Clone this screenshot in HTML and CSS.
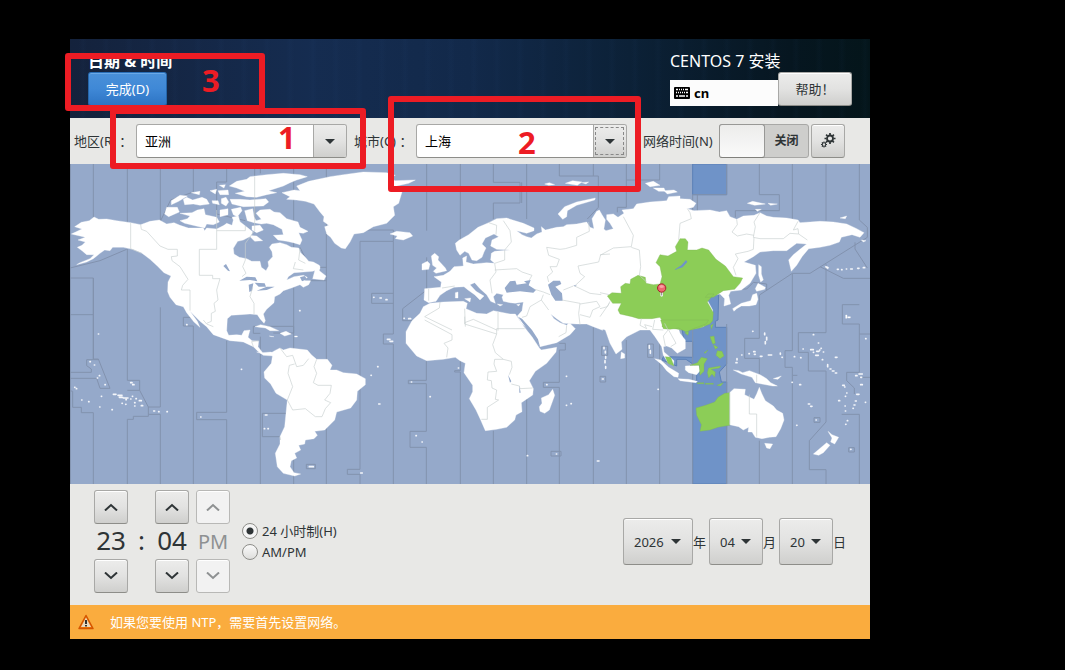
FILE: index.html
```html
<!DOCTYPE html>
<html lang="zh-CN">
<head>
<meta charset="utf-8">
<title>日期 &amp; 时间</title>
<link rel="stylesheet" href="styles.css">
</head>
<body>
<main class="installer">
  <header class="header">
    <div class="header-left">
      <h1 class="title">日期 &amp; 时间</h1>
      <button class="btn btn-primary" type="button">完成(D)</button>
    </div>
    <div class="header-right">
      <p class="product">CENTOS 7 安装</p>
      <div class="header-tools">
        <button class="keyboard" type="button">
          <svg width="16" height="12" viewBox="0 0 16 12" aria-hidden="true"><rect width="16" height="12" rx="1" fill="#000"/><path d="M2 2.500h2M5 2.500h1M7 2.500h1M9 2.500h1M11 2.500h3M2 5.500h1M4 5.500h1M6 5.500h1M8 5.500h1M10 5.500h1M12 5.500h2M2 9h2M5 9h6M12 9h2" stroke="#fff" stroke-width="1.600"/></svg>
          <span>cn</span>
        </button>
        <button class="btn btn-help" type="button">帮助！</button>
      </div>
    </div>
  </header>

  <section class="toolbar">
    <label class="region-label" for="region">地区(R) ：</label>
    <div class="combo">
      <input class="combo-input" id="region" type="text" size="1" value="亚洲">
      <button class="combo-button" type="button" aria-label="选择地区"><svg width="10" height="5" viewBox="0 0 10 5"><path d="M0 0h10L5 5z" fill="#2e3436"/></svg></button>
    </div>
    <label class="city-label" for="city">城市(C) ：</label>
    <div class="combo">
      <input class="combo-input" id="city" type="text" size="1" value="上海">
      <button class="combo-button combo-button-focus" type="button" aria-label="选择城市"><svg width="10" height="5" viewBox="0 0 10 5"><path d="M0 0h10L5 5z" fill="#2e3436"/></svg></button>
    </div>
    <label class="ntp-label" for="ntp">网络时间(N)</label>
    <div class="switch"><input class="switch-knob" id="ntp" type="checkbox"><span class="switch-text">关闭</span></div>
    <button class="btn btn-gear" type="button" aria-label="配置 NTP">
      <svg width="16" height="16" viewBox="0 0 16 16" fill="none" stroke="#2e3436"><circle cx="10" cy="5.500" r="3" stroke-width="1.800"/><path d="M10 0v2M10 9v2M4.500 5.500h2M13.500 5.500h2M6.100 1.600l1.400 1.400M12.500 8l1.400 1.400M13.900 1.600L12.500 3M7.500 8L6.100 9.400" stroke-width="1.700"/><circle cx="4" cy="11.500" r="1.800" stroke-width="1.100"/><path d="M4 8.500v1.200M4 13.300v1.200M1 11.500h1.200M5.800 11.500H7M1.900 9.400l.8.800M5.300 12.800l.8.800M6.100 9.400l-.8.800M2.700 12.800l-.8.800" stroke-width="1.100"/></svg>
    </button>
  </section>

  <svg class="map" viewBox="0 0 2400 960" role="img" aria-label="时区地图">
    <rect width="2400" height="960" fill="#95a9ca"/>
    <!-- selected time zone -->
    <g class="zone">
      <path d="M1868 0h102v92h-102z"/>
      <path transform="translate(1590 468)" d="M320 -80L356 -80 354 0 346 4 346 22 380 22 380 132 358 156 364 186 380 186 380 492 278 492 278 184 290 182 290 140 258 118 230 118 230 138 186 120 190 110 278 112 278 64 252 64 246 26 270 26 270 10 330 -8z"/>
    </g>
    <!-- time zone limits -->
    <g class="limits">
      <path d="M1 0V960M70 0V170M70 342V585L85 585 120 673 90 673 80 643 0 643M0 342H70V452H1M70 452V585M50 587H84M50 587V605L64 615V625H0M0 680L8 682V730H34V746H70V960M172 0V175M172 255V649H209V679L235 729V757H190V766H172V960M235 729H271M235 751H271M172 679H209M271 0V172L302 108 370 84M271 430V729M271 751V960M370 0V84M370 486V960M340 460H370M340 460V486H370M470 0V54H440V150L526 170M470 530V745H380V767H470V960M554 0V170M571 0V28M571 518V960M550 487H671V507H610M550 487V508H571M577 748H650M577 748V818H630M671 0V250M671 370V960M769 0V960M690 250L720 310H770M720 350H770M870 80V198H970V232H870V916H832V931H870V960M970 0V60M970 232V510H940V540H970V960M970 388H905V418H970"/>
      <path d="M0 312L90 290 170 256M1070 0V200M1070 280V378L998 434V470H1035M1069 590V649H1015V659H1069V802H1020V850H1069V960M1171 0V240M1171 588V620H1154V624H1171V960M1270 0V55H1350V117H1270V165M1270 800V960M1355 55V117M1370 0V165M1370 700V960M1468 0V36H1585M1468 538H1486V558H1468V655H1420V670H1468V960M1570 0V36M1585 36V130L1552 165M1570 490V960M1669 0V130H1642V145M1669 528V960M1769 0V48H1669M1769 528V960M1882 92V142M1868 92V960M1970 0V92H1868M1970 480V960M2068 0V92H2128V140H1996V160M2068 392V523H2024V583H2068V630M2068 830V960M2167 0V165M2167 329V560H2145V610H2167V634H2182M2167 634V960M2268 0V170M2268 300V506H2185V565H2215V621H2268V774L2218 830V917H2268V960M2368 0V168L2392 190V220L2220 328H2167L2070 392M2250 308L2320 343H2400M2355 235V255L2392 312M2368 422H2317V480H2368V510H2400M2368 510V625H2330V650L2353 672V690M2368 640H2400M2315 751H2368V960M1970 375H2030L2050 355 2090 360V380"/>
      <path d="M709 901h27v13h-27zM2232 761h18v14h-18zM2336 851h17v13h-17zM1443 862h30v14h-30zM1590 637h17v17h-17zM1595 547h18v27h-18zM1733 540h17v40h-17z"/>
    </g>
    <g class="land">
      <!-- North America -->
      <g transform="translate(0 -12)">
        <path d="M4 222L36 207 14 200 34 187 58 182 72 171 86 178 110 177 140 182 182 188 212 194 240 184 268 180 290 192 312 188 330 196 355 204 400 204 404 212 410 204 440 207 462 196 470 190 486 196 490 180 486 172 505 168 510 185 535 205 548 215 543 228 520 240 503 244 490 265 492 282 508 292 530 296 545 304 570 304 574 322 588 332 596 318 594 305 608 290 606 275 598 262 606 252 630 248 650 254 664 262 686 264 692 278 706 292 716 304 730 306 748 316 750 326 728 334 700 336 672 338 655 350 650 360 672 350 700 346 712 352 704 362 722 362 716 374 700 382 690 374 664 384 640 392 630 402 614 410 612 428 590 448 580 462 586 482 582 490 570 476 562 464 540 462 510 464 484 466 472 476 470 512 476 526 500 524 515 526 522 512 540 510 534 532 546 542 566 544 564 560 578 578 604 576 612 588 580 586 562 572 550 560 520 546 500 544 480 542 430 524 410 500 390 484 360 454 382 484 390 502 372 486 350 458 340 440 318 434 300 412 293 395 294 366 303 348 282 338 262 318 240 298 214 278 188 268 160 262 128 262 120 272 104 270 90 280 70 296 50 306 20 314 30 308 60 296 72 284 50 284 36 272 22 262 36 256 46 246 24 240 46 232 30 228z"/>
        <path d="M736 326L750 318 748 332 768 348 762 360 742 358 728 356zM290 142L322 142 328 156 296 170 284 162zM330 160L366 158 382 150 402 146 406 164 440 172 448 186 430 194 410 192 404 204 378 198 344 190 330 182 352 176 360 168zM340 118L350 112 368 120 396 112 410 118 418 132 390 136 370 132 344 134zM304 122L330 106 352 108 326 124 304 134zM364 98L390 94 388 104zM420 92L440 88 436 102zM444 92L474 90 476 104 450 104zM426 122h18l4 12-20-4zM454 116l14-4 8 14-8 12-14-8zM480 118L510 118 540 120 588 116 596 126 580 138 520 140 486 132zM484 148L512 142 516 152 502 170 490 164zM450 150l24-4v18l-24 6zM448 76l18-2-4 10z"/>
        <path d="M478 78L500 64 530 58 540 50 590 44 640 40 690 44 712 50 680 60 660 68 640 78 596 92 620 98 590 104 560 112 530 110 496 100 524 94 500 84z"/>
        <path d="M524 152L548 146 552 170 558 182 574 178 558 160 570 150 600 148 612 156 630 158 650 176 684 186 690 202 714 214 700 220 686 218 696 240 690 254 670 248 650 244 624 240 610 226 640 224 636 208 610 194 590 190 574 192 552 188 532 182zM546 198L570 196 580 210 560 218 546 210zM536 226l24 2 18 14-24 2z"/>
        <path d="M636 98L672 90 690 92 680 78 716 64 780 50 820 44 880 36 950 38 976 46 954 54 976 62 1036 60 1016 70 980 78 996 96 986 130 970 140 974 166 950 190 910 200 880 218 852 222 840 246 826 266 814 264 794 250 782 232 770 222 764 200 776 196 760 184 762 170 750 156 732 132 706 124 680 120 650 118 660 110z"/>
        <path d="M555 500L572 494 600 500 626 512 600 512 586 504zM630 520l18-6 16 8-20 6zM604 530l-6-2 14 2zM674 528l8 0 0 3-8 0z"/>
      </g>
      <!-- South America -->
      <path transform="translate(0 468)" d="M560 96L578 102 604 98 614 92 630 84 640 90 660 84 712 90 724 104 740 118 772 118 786 136 780 150 800 150 820 158 860 162 886 176 886 194 862 214 860 240 842 264 800 276 794 300 764 330 734 334 742 346 732 356 706 360 704 372 686 376 692 390 674 400 680 414 664 422 660 440 672 458 692 462 674 468 640 460 622 440 616 400 630 372 630 350 644 320 648 280 652 240 618 220 602 192 584 174 582 156 604 130 608 104z"/>
      <!-- Africa and Madagascar -->
      <g transform="translate(930 468)">
        <path d="M78 35L96 2 120 -20 130 -40 150 -50 190 -54 250 -56 262 -50 258 -34 290 -20 320 -18 340 -28 390 -18 406 -18 418 0 432 20 456 50 478 84 484 90 530 82 528 96 500 130 466 154 448 182 460 206 458 225 424 248 426 275 408 285 404 300 380 322 350 328 316 332 302 300 288 270 268 236 278 215 278 196 252 158 256 130 240 122 226 112 190 118 140 122 110 108 78 70zM518 208L524 226 508 270 494 280 480 274 478 260 486 250 484 234 506 224z"/>
      </g>
      <!-- Europe, Arabia and western Asia -->
      <g transform="translate(780 -12)">
        <path d="M376 250L388 240 416 224 444 202 476 188 500 176 530 174 548 180 580 190 612 204 612 212 590 220 560 212 576 224 590 230 604 234 620 222 636 216 634 200 646 210 680 202 700 200 710 194 740 192 770 186 780 202 792 206 786 176 800 154 808 150 816 164 826 180 822 205 818 215 818 511 790 500 770 492 740 492 700 490 680 476 662 462 672 476 690 488 710 496 718 488 736 506 720 524 680 548 630 560 616 530 590 504 574 490 562 468 576 452 580 426 556 430 540 428 520 424 516 412 520 404 500 400 490 410 496 430 482 424 470 404 450 386 434 368 420 374 438 394 462 408 450 420 434 404 414 390 402 380 372 382 350 392 330 406 318 424 296 428 282 420 284 386 332 382 334 366 312 350 340 346 360 334 372 320 400 318 398 294 410 288 408 306 430 312 470 308 494 310 482 300 484 280 494 274 540 270 500 268 482 258 486 240 506 230 492 222 466 234 456 252 468 264 462 276 456 292 440 302 426 300 416 280 404 274 390 286 380 270z"/>
        <path d="M180 222L200 214 240 218 248 228 220 240 196 236 202 228zM304 288L314 280 326 290 324 300 346 324 350 332 318 340 310 334 320 324 308 316zM276 312L292 304 300 312 296 328 276 330zM684 162L704 140 740 126 796 114 794 120 740 136 712 152 710 170 698 178zM404 416l18-2-2 12zM376 398l8-2 0 18-8 0zM502 432l16 2-8 4zM560 434l10-2-4 6zM644 72l14-4 16 6-18 2zM706 70l22-8 28 4-14 10zM756 68l20-2-8 6z"/>
      </g>
      <!-- Eastern Asia -->
      <g transform="translate(1590 -12)">
        <path d="M2 200L18 212 40 206 30 190 20 178 20 164 40 162 54 172 72 160 66 150 100 146 110 132 150 126 200 122 206 110 240 108 240 116 270 118 288 130 280 142 262 146 282 152 330 150 358 156 380 152 390 170 410 178 430 168 462 166 480 158 500 168 520 172 560 174 594 180 600 188 660 184 700 186 740 192 770 206 792 218 780 232 756 224 724 232 718 246 690 256 660 262 626 266 606 290 590 316 574 334 566 300 580 284 600 268 620 252 590 250 560 272 520 272 480 276 460 290 432 306 466 316 468 340 450 370 424 390 392 394 386 406 392 432 372 438 374 416 360 402 340 406 316 412 324 424 338 450 335 480 310 500 270 508 236 508 240 520 256 540 256 566 232 580 215 564 200 558 190 560 192 576 206 588 222 602 220 616 204 608 190 586 185 560 165 530 150 510 120 510 80 530 64 546 66 568 48 582 30 550 16 510 4 506 0 498z"/>
        <path d="M136 70L160 64 180 76 150 80zM160 84l32 0 4 10-20 0zM192 92l30-2 10 6-30 6zM442 130l16-6 38 8-32 4zM504 130l28 2-20 4zM466 148l18 0-12 6zM720 174l20-6-4 8zM784 240l14 2-8 4zM476 314L484 320 484 342 490 360 482 366 476 346zM474 370L496 382 494 388 470 394 466 386zM470 400L474 418 468 434 448 438 424 438 410 446 402 454 398 446 424 430 452 422 458 404zM676 318l10 4 -2 5-8-5zM737 465h4v10h-4zM743 470h8v4h-8zM64 576l10 6 0 12-12 2z"/>
      </g>
      <!-- Oceania -->
      <g transform="translate(1590 468)">
        <path d="M164 116L182 120 206 142 236 160 234 172 222 170 200 152 186 134zM234 176L266 178 292 184 288 188 240 182zM256 138L296 136 300 152 290 164 266 158 256 150zM400 150L416 152 428 158 448 152 480 164 500 176 512 188 532 198 518 198 486 192 466 188 456 172 424 162zM520 176l24-8-10 10zM389 218L402 206 436 208 434 224 462 238 470 222 478 202 486 222 496 242 520 258 530 270 548 280 552 300 542 326 528 350 508 352 486 356 466 352 456 336 444 336 446 322 430 330 416 320 389 314zM494 370L518 372 510 386 500 384zM684 334L696 344 716 352 704 372 692 366 696 354zM680 368L690 376 670 398 656 406 640 402z"/>
      </g>
    </g>
    <!-- land of the selected zone -->
    <g class="green">
      <path transform="translate(1590 -12)" d="M22 408L36 398 64 400 62 380 76 370 90 372 92 358 114 346 136 352 138 370 160 374 180 372 186 350 180 320 168 308 180 284 204 288 230 274 226 260 240 236 256 236 264 246 262 270 290 270 306 264 326 270 348 298 376 318 400 350 428 354 420 370 404 388 370 392 340 412 316 412 324 402 342 402 322 426 340 458 338 482 330 492 300 504 270 510 246 510 200 502 186 500 190 488 180 472 156 476 116 476 96 470 60 462 54 450 64 430 38 430z"/>
      <path transform="translate(1590 468)" d="M182 0L326 0 318 12 280 26 258 36 236 24 210 28 190 26zM254 38l12-4-2 12zM332 16l8-4-6 16zM330 50L342 48 346 70 338 72zM340 74l14 8-8 6zM352 92l14 2 6 14-12 8-12-10zM312 98l12-8-8 10zM196 110L212 112 222 138 204 130zM270 136L292 128 304 112 322 116 312 132 312 154 300 166 298 136zM326 144L362 138 358 144 334 148 346 156 344 172 336 162 326 174 322 158zM292 188h20v3h-20zM316 190h24v3h-24zM350 196l20-8-8 10zM389 218L389 316 354 322 330 330 300 334 304 314 290 286 288 264 316 256 344 246 354 232 374 220z"/>
    </g>
    <!-- inland waters -->
    <g class="water">
      <path transform="translate(0 -12)" d="M508 362L530 350 556 352 562 364 540 360zM536 374L550 370 546 392 538 396zM554 368L584 370 588 380 566 380zM560 392L590 380 614 380 590 390zM460 318L468 312 480 334 474 332zM690 352l14-4 8 10-16 6z"/>
      <path transform="translate(780 -12)" d="M524 384L540 364 556 362 560 374 590 370 582 364 602 360 596 376 618 390 610 398 570 394 530 398zM654 374L670 362 690 362 694 372 676 380 696 400 698 422 676 422 664 404zM564 470L576 476 606 510 624 538 630 560 618 544zM730 376l10 0-4 4z"/>
      <path transform="translate(930 468)" d="M384 164L394 184 390 188zM418 196l4 22-4 0z"/>
    </g>
    <path transform="translate(1590 -12)" d="M222 330L244 316 258 300 262 306 248 322z" fill="#6f93c8"/>
    <!-- country and zone borders on land -->
    <g class="borders">
      <path transform="translate(0 -12)" d="M182 188V266L215 280M212 194L214 208 230 214 270 258 294 268 322 268V288L304 290 306 302 330 320 354 358 338 376 334 390 360 390 360 452M440 150V212H526V198M554 50V212L526 250V300L518 320 528 340 516 350M440 212V268H388V346H428V356H450L440 390 444 420 432 430 436 454 424 460V484L410 490M548 382L540 410 552 430V462M676 306L670 326 700 330M690 266L686 300 706 310"/>
      <path transform="translate(0 468)" d="M400 0L410 12 430 20M550 80L545 65 566 62M630 84L650 110 668 106 680 140 700 136 716 116M740 118L732 140 740 160 730 188 744 196 784 196 780 220 764 240 782 248 766 266 756 290 736 290 706 266 668 270 652 240 668 200 654 160 658 136 674 132M630 350L632 360"/>
      <path transform="translate(780 -12)" d="M476 188L500 196 498 224M520 182L540 212 544 246 524 270 524 300 494 310 498 336 480 360 486 400M494 330L560 326 576 336 606 346 598 360M776 186L778 214 740 232V256L706 266 690 268 650 262 656 286 688 298 680 320 660 320 668 336 652 350 656 366M840 282L812 284 806 306 744 318 750 340 764 350 734 378 780 400 814 404M614 388L640 396 660 404M696 420L750 430 746 460 750 494M750 432L800 424 810 440 788 450 780 472 750 464M640 404L634 420 600 440 590 468 576 472M634 420L656 450M330 426L328 444 284 470 366 510M404 446L406 500M504 456V512M404 488L430 478 500 510M336 384L374 378M296 386L296 422M700 390L730 378"/>
      <path transform="translate(930 468)" d="M134 0L216 44V60L192 70 204 84 200 112M254 -10V12L350 42V26H434M350 42L338 74 346 98 370 118H344L342 132 350 154 324 156 322 180 334 182 336 204 350 210 346 238 356 240 322 262V298H304M370 118L394 124 396 142 388 164M394 192L418 198 420 206 458 204M536 50L558 38 560 16"/>
      <path transform="translate(1590 -12)" d="M70 170L100 226 94 260 40 264 0 286M94 262L118 270 122 320 118 346 140 366M262 146L270 158 274 176 240 190 236 240M480 158L462 186 466 200 460 232 480 236 550 236 570 220 596 222 594 206 580 210 594 184M410 178L412 194 396 216 412 228 440 222 462 226M462 232L460 268 444 274 406 282 414 296 400 322 408 346M596 222L622 240M0 446L22 440 30 424M28 430L0 470M124 476L120 496 140 506 134 494 156 500M164 480L158 508 190 510M194 490L204 510 190 528 196 558M206 510L228 550 212 560M0 398L28 404"/>
      <path transform="translate(1590 468)" d="M448 224V282H470V350M470 164V188M389 218V314"/>
    </g>
    <!-- small islands -->
    <g class="islets">
      <path d="M60 593h1M73 603h1M88 635h1M82 642h1M105 662h1M14 670h1M19 674h1M35 708h1M56 713h1M94 697h1M89 729h1M126 737h1M130 691h8M144 694h12M148 700h10M160 702h14M168 707h1M156 718h1M167 721h1M182 705h1M187 697h1M198 704h1M208 710h6M194 716h1M194 726h1M214 725h4M182 656h4M188 662h4M251 741h3M266 743h1M291 743h1M392 759h1M514 616h1M586 753h5M583 794h1M594 794h1M689 440h1M718 908h12M872 927h5M903 634h1M923 608h1M926 720h4M952 526h8M960 532h8M85 510h1M350 482h1"/>
      <path d="M911 400h1M930 402h4M948 407h3M1002 463h1M1016 464h6M1024 654h1M1080 698h1M1038 815h1M1056 834h1M1165 612h1M1372 875h1M1459 870h1M1430 662h1M1489 637h1M1489 724h1M1503 719h1M1602 550v4M1606 562v5M1607 578v5M1605 590v6M1607 608v5M1597 645h3M1582 891h5M1738 545v8M1741 560v8M1764 676h1"/>
      <path d="M2048 502h1M2084 507v5M2090 520v8M2086 533v6M2015 573h1M2001 584v4M1998 596h3M2037 569h1M2051 563h4M2053 571h3M2071 577h5M2095 573h10M2131 567v4M2136 580h1M2173 578h1M2192 581h1M2199 555h1M2230 512h1M2245 537h1M2222 557h8M2230 565h1M2240 562h7M2237 574h8M2249 558h1M2253 553h1M2260 564h1M2257 587h1M2296 580h5M2273 602v6M2280 615h3M2287 621h5M2296 627h4M2357 635h4M2367 630h10M2372 640h3M2387 524h1M2318 664h5M2324 669h1M2372 662h5M2330 687h1M2306 710h3M2326 697h1M2356 711h3M2352 723h3M2349 733h1M2325 726h1M2326 741h1M2360 691h7M2386 715h1M2332 770h1M2327 781h1M2180 784h1M2238 768h1M2342 856h1M2215 720h4M2222 727h4M2189 662h3M2166 655h1M2270 310h1M2302 316h3M2315 317h1M2329 315h1M2342 315h5M2363 313h4M2380 311h4"/>
    </g>
    <!-- location pin -->
    <g transform="translate(1775 372)"><path d="M0 10V22" stroke="#eee" stroke-width="8" stroke-linecap="round"/><path d="M0 12V22" stroke="#888" stroke-width="3"/><circle r="12.500" fill="#ed6870" stroke="#a5242c" stroke-width="3"/><path d="M-7-2a7 7 0 0 1 14 0q-7 4-14 0z" fill="#f8a2a4"/></g>
  </svg>

  <section class="controls">
    <div class="clock">
      <button class="btn step" type="button" aria-label="增加小时"><svg viewBox="0 0 14 8"><path d="M1 7.500l6-5.500 6 5.500"/></svg></button>
      <span></span>
      <button class="btn step" type="button" aria-label="增加分钟"><svg viewBox="0 0 14 8"><path d="M1 7.500l6-5.500 6 5.500"/></svg></button>
      <button class="btn step" type="button" aria-label="切换到 AM" disabled><svg viewBox="0 0 14 8"><path d="M1 7.500l6-5.500 6 5.500"/></svg></button>
      <span class="digits">23</span><span class="digits">:</span><span class="digits">04</span><span class="meridiem">PM</span>
      <button class="btn step" type="button" aria-label="减少小时"><svg viewBox="0 0 14 8"><path d="M1 .5l6 5.500 6-5.500"/></svg></button>
      <span></span>
      <button class="btn step" type="button" aria-label="减少分钟"><svg viewBox="0 0 14 8"><path d="M1 .5l6 5.500 6-5.500"/></svg></button>
      <button class="btn step" type="button" aria-label="切换到 PM" disabled><svg viewBox="0 0 14 8"><path d="M1 .5l6 5.500 6-5.500"/></svg></button>
    </div>
    <div class="formats">
      <label class="format"><input class="radio" type="radio" name="format" checked>24 小时制(H)</label>
      <label class="format"><input class="radio" type="radio" name="format">AM/PM</label>
    </div>
    <div class="date">
      <div class="date-field"><select class="btn date-select year" id="year"><option>2026</option></select><svg class="date-arrow" viewBox="0 0 10 5"><path d="M0 0h10L5 5z"/></svg></div>
      <label class="date-unit" for="year">年</label>
      <div class="date-field"><select class="btn date-select" id="month"><option>04</option></select><svg class="date-arrow" viewBox="0 0 10 5"><path d="M0 0h10L5 5z"/></svg></div>
      <label class="date-unit" for="month">月</label>
      <div class="date-field"><select class="btn date-select" id="day"><option>20</option></select><svg class="date-arrow" viewBox="0 0 10 5"><path d="M0 0h10L5 5z"/></svg></div>
      <label class="date-unit" for="day">日</label>
    </div>
  </section>

  <footer class="notice">
    <svg width="16" height="16" viewBox="0 0 16 16" aria-hidden="true"><path d="M8 1.500L15 14.500H1z" fill="#f57900" stroke="#d45500" stroke-width="1.500" stroke-linejoin="round"/><path d="M8 3.500L13 13H3z" fill="#ead9bd"/><path d="M8 6v4M8 11v1.500" stroke="#222" stroke-width="1.800"/></svg>
    <span>如果您要使用 NTP，需要首先设置网络。</span>
  </footer>

  <div class="mark mark-done"><span>3</span></div>
  <div class="mark mark-region"><span>1</span></div>
  <div class="mark mark-city"><span>2</span></div>
</main>
</body>
</html>
```
FILE: styles.css
```css
* { box-sizing: border-box; }

body {
  margin: 0;
  padding: 39px 70px 31px;
  background: #000;
  color: #2e3436;
  font: 13px/20px "Noto Sans", "Noto Sans CJK SC", sans-serif;
}

button, input, select { font: inherit; color: inherit; margin: 0; }

.installer {
  position: relative;
  max-width: 800px;
  background: #e8e8e6;
}

/* Header */
.header {
  display: flex;
  justify-content: space-between;
  padding: 11px 18px 12px;
  color: #fff;
  background:
    repeating-linear-gradient(90deg, transparent 0 9px, rgba(60, 110, 180, .03) 13px, transparent 17px 23px),
    linear-gradient(90deg, #14223c 0%, #152c50 30%, #12294a 50%, #0c2137 70%, #061620 90%, #04151a 100%);
}
.title { margin: 0; font-size: 16px; line-height: 22px; font-weight: 700; }
.product { margin: 0; font-size: 16px; line-height: 22px; }
.header-tools { display: flex; align-items: flex-start; }

.btn {
  display: inline-flex;
  align-items: center;
  justify-content: center;
  height: 34px;
  padding: 0 16px;
  border: 1px solid #a8a8a6;
  border-bottom-color: #8d8d89;
  border-radius: 3px;
  background: linear-gradient(#ececeb, #e2e2e1 50%, #cfcfcd);
  box-shadow: inset 0 1px #fff;
  color: #2e3436;
}
.btn-primary {
  width: 79px;
  color: #fff;
  border-color: #2a6fb8 #2566aa #1c5594;
  background: linear-gradient(#4a90d9, #3f88d6 50%, #2d74c4);
  box-shadow: inset 0 1px #6aa8e6;
}
.keyboard {
  display: flex;
  align-items: center;
  gap: 4px;
  width: 108px;
  height: 26px;
  margin-top: 8px;
  padding: 0 4px;
  border: 0;
  background: #fcfcfc;
  color: #000;
  font-weight: 700;
  line-height: 20px;
}
.btn-help { width: 74px; }

/* Location toolbar */
.toolbar { display: flex; align-items: center; padding: 6px 4px; white-space: nowrap; }
.region-label { flex: none; width: 62px; }
.city-label { flex: none; width: 62px; margin-left: 7px; }
.ntp-label { flex: none; width: 72px; margin: 0 4px 0 16px; }
.combo {
  display: flex;
  flex: 0 1 211px;
  min-width: 0;
  height: 34px;
  border: 1px solid #a8a8a6;
  border-bottom-color: #8d8d89;
  border-radius: 3px;
  background: #fff;
}
.combo-input {
  flex: 1;
  min-width: 0;
  padding: 0 8px;
  border: 0;
  outline: 0;
  background: transparent;
  color: #000;
}
.combo-button {
  display: flex;
  flex: none;
  align-items: center;
  justify-content: center;
  width: 33px;
  padding: 0;
  border: 0;
  border-left: 1px solid #a8a8a6;
  border-radius: 0 2px 2px 0;
  background: linear-gradient(#ececeb, #e2e2e1 50%, #cfcfcd);
}
.combo-button-focus { outline: 1px dashed #888; outline-offset: -3px; }
.switch {
  display: flex;
  flex: none;
  width: 90px;
  height: 34px;
  border: 1px solid #a8a8a6;
  border-radius: 3px;
  background: #cececc;
}
.switch-knob {
  appearance: none;
  flex: none;
  width: 46px;
  height: 34px;
  margin: -1px 0 0 -1px;
  border: 1px solid #989896;
  border-bottom-color: #80807c;
  border-radius: 3px;
  background: linear-gradient(#ececeb, #fafafa);
}
.switch-text { flex: 1; text-align: center; font-size: 12px; line-height: 32px; font-weight: 700; }
.btn-gear { flex: none; width: 34px; padding: 0; margin-left: 2px; }

/* Map */
.map { display: block; width: 100%; height: auto; }
.zone { fill: #6f93c8; stroke: #5c80b6; stroke-width: 3; }
.limits { fill: none; stroke: #8292ae; stroke-width: 3; }
.land { fill: #fff; stroke: #fff; stroke-width: 1; }
.green { fill: #8ccd57; stroke: #7bb254; stroke-width: 1; }
.water { fill: #95a9ca; }
.borders { fill: none; stroke: #c9d0d0; stroke-width: 2; stroke-linejoin: round; }
.islets { fill: none; stroke: #f4f6fa; stroke-width: 5; stroke-linecap: round; }

/* Time and date */
.controls { display: flex; align-items: center; padding: 6px 24px 12px; }
.clock {
  display: grid;
  grid-template-columns: 34px 27px 34px 34px;
  grid-template-rows: 34px 35px 34px;
  align-items: center;
  justify-items: center;
}
.clock > :nth-child(4n) { margin-left: 14px; }
.step { width: 34px; padding: 0; }
.step svg { width: 14px; height: 8px; flex: none; fill: none; stroke: #2e3436; stroke-width: 2; }
.step:disabled { background: #f2f2f2; border-color: #b8b8b6; }
.step:disabled svg { stroke: #8e9192; }
.digits { font-size: 26px; line-height: 30px; padding-bottom: 4px; }
.meridiem { font-size: 20px; line-height: 34px; color: #8e9192; }
.formats { margin-left: 19px; }
.format { display: flex; align-items: center; gap: 4px; height: 21px; }
.radio {
  appearance: none;
  width: 16px;
  height: 16px;
  border: 1px solid #8d8d89;
  border-radius: 50%;
  background: linear-gradient(#fafafa, #dededc);
}
.radio:checked { background: radial-gradient(circle, #2e3436 0 3px, #f4f4f4 4px); }
.date { display: flex; align-items: center; margin-left: auto; }
.date-field { position: relative; }
.date-select { appearance: none; width: 54px; height: 47px; padding: 0 10px; }
.year { width: 70px; }
.date-arrow { position: absolute; top: 21px; right: 12px; width: 10px; height: 5px; fill: #2e3436; pointer-events: none; }
.date-unit { width: 16px; }
.date-unit:last-child { width: 13px; }

/* Notice */
.notice {
  display: flex;
  align-items: center;
  gap: 16px;
  min-height: 34px;
  padding: 0 8px;
  background: #faac3e;
  color: #fff;
}

/* Step marks drawn over the window */
.mark {
  position: absolute;
  border: 6px solid #ed1c24;
  border-radius: 3px;
  color: #ed1c24;
  font-size: 31px;
  line-height: 31px;
  font-weight: 700;
  pointer-events: none;
}
.mark span { position: absolute; }
.mark-done { left: -5px; top: 14px; width: 200px; height: 58px; }
.mark-done span { left: 131px; top: 6px; }
.mark-region { left: 40px; top: 69px; width: 256px; height: 61px; }
.mark-region span { left: 162px; top: 8px; }
.mark-city { left: 318px; top: 57px; width: 253px; height: 96px; }
.mark-city span { left: 124px; top: 25px; }
```
